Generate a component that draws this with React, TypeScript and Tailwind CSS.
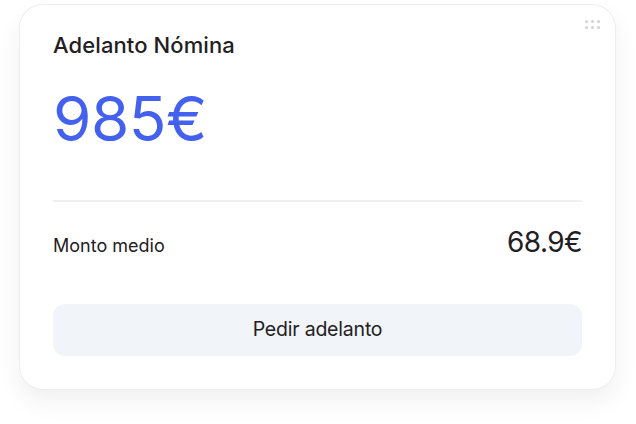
import React from "react";

export default function App() {
  return (
    <div className="w-[636px] h-[424px] bg-white pt-[4px] pl-[19px]" style={{ fontFamily: "Inter, 'Noto Sans', sans-serif" }}>
      <div className="relative w-[597px] h-[386px] rounded-[24px] border border-[#eceef1] bg-white shadow-[0_12px_24px_rgba(15,23,42,0.06)] px-[33px] pt-[26px]">
        <div className="absolute right-[15px] top-[15px] grid grid-cols-3 gap-[3px]">
          {Array.from({ length: 6 }).map((_, i) => (
            <span key={i} className="block w-[3px] h-[3px] rounded-full bg-[#cdd0d5]" />
          ))}
        </div>
        <h2 className="text-[22px] leading-[28px] font-medium text-[#1f2023] tracking-[0.1px]">Adelanto Nómina</h2>
        <div className="mt-[29px] text-[62px] leading-[62px] font-normal text-[#4361ee] tracking-[-0.5px]">985€</div>
        <div className="mt-[50px] h-[2px] bg-[#eef0f2]" />
        <div className="mt-[23px] flex items-baseline justify-between">
          <span className="text-[18px] leading-[24px] text-[#1f2023]">Monto medio</span>
          <span className="text-[28px] leading-[34px] text-[#1f2023] tracking-[-0.6px]">68.9€</span>
        </div>
        <button className="mt-[45px] w-full h-[52px] rounded-[12px] bg-[#f1f4f8] text-[19.5px] text-[#1f2023] tracking-[-0.2px]">Pedir adelanto</button>
      </div>
    </div>
  );
}
